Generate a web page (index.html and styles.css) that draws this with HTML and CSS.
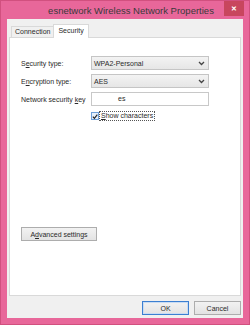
FILE: index.html
```html
<!DOCTYPE html>
<html>
  <head>
    <meta charset="UTF-8">
    <title>esnetwork Wireless Network Properties</title>
    <link rel="stylesheet" href="styles.css">
  </head>
  <body>
    <div class="window">
      <div class="titlebar">
        <span class="title">esnetwork Wireless Network Properties</span>
        <span class="close">&#x2715;</span>
      </div>

      <div class="client">
        <div class="tabs">
          <div class="tab">Connection</div>
          <div class="tab active">Security</div>
        </div>

        <div class="panel">
          <div class="form">
            <div class="row">
              <span class="label">S<u>e</u>curity type:</span>
              <div class="select">
                <span>WPA2-Personal</span>
                <svg class="chevron" width="7" height="5" viewBox="0 0 7 5"><path d="M1 1 L3.5 3.5 L6 1" fill="none" stroke="#444" stroke-width="1.3"/></svg>
              </div>
            </div>
            <div class="row">
              <span class="label">E<u>n</u>cryption type:</span>
              <div class="select">
                <span>AES</span>
                <svg class="chevron" width="7" height="5" viewBox="0 0 7 5"><path d="M1 1 L3.5 3.5 L6 1" fill="none" stroke="#444" stroke-width="1.3"/></svg>
              </div>
            </div>
            <div class="row">
              <span class="label">Network security <u>k</u>ey</span>
              <div class="textbox">es</div>
            </div>
            <div class="row check-row">
              <span class="checkbox">
                <svg width="7" height="7" viewBox="0 0 7 7"><path d="M1 3.6 L2.8 5.6 L6.2 1.2" fill="none" stroke="#222" stroke-width="1.4"/></svg>
              </span>
              <span class="check-label"><u>S</u>how characters</span>
            </div>
          </div>

          <div class="advanced">
            <button class="btn">A<u>d</u>vanced settings</button>
          </div>
        </div>

        <div class="footer">
          <button class="btn dialog-btn default">OK</button>
          <button class="btn dialog-btn">Cancel</button>
        </div>
      </div>
    </div>
  </body>
</html>
```

FILE: styles.css
```css
:root {
  --accent: #e8679a;
  --accent-dark: #d1507f;
  --close: #c8465e;
  --face: #f0f0f0;
  --text: #2a2a2a;
}

html, body {
  margin: 0;
  padding: 0;
}

body {
  width: 250px;
  height: 325px;
  font-family: "Liberation Sans", Arial, sans-serif;
  font-size: 7px;
  color: var(--text);
  overflow: hidden;
}

u {
  text-decoration-thickness: 1px;
  text-underline-offset: 1px;
}

.window {
  box-sizing: border-box;
  width: 250px;
  height: 325px;
  background: var(--accent);
  border: 1px solid var(--accent-dark);
  padding: 0 6px 6px 6px;
  display: flex;
  flex-direction: column;
}

.titlebar {
  height: 18px;
  display: flex;
  align-items: flex-start;
  justify-content: center;
  position: relative;
}

.title {
  font-size: 9.5px;
  color: #3a3a3a;
  line-height: 19px;
  margin-left: 12px;
}

.close {
  position: absolute;
  right: -1px;
  top: 0;
  width: 20px;
  height: 15px;
  background: var(--close);
  color: #fff;
  font-size: 7px;
  font-weight: bold;
  display: flex;
  align-items: center;
  justify-content: center;
}

.client {
  flex: 1;
  background: var(--face);
  display: flex;
  flex-direction: column;
  padding: 5px 2px 3px 2px;
}

.tabs {
  display: flex;
  align-items: flex-end;
  height: 13px;
  padding-left: 2px;
  position: relative;
  z-index: 1;
}

.tab {
  box-sizing: border-box;
  height: 11px;
  padding: 0 3px;
  line-height: 10px;
  border: 1px solid #d9d9d9;
  border-bottom: none;
  background: #f0f0f0;
}

.tab.active {
  height: 14px;
  background: #fff;
  margin-left: -1px;
  margin-bottom: -1px;
  padding: 0 4px;
  line-height: 11px;
}

.panel {
  box-sizing: border-box;
  height: 259px;
  background: #fff;
  border: 1px solid #d9d9d9;
  display: flex;
  flex-direction: column;
  justify-content: space-between;
  padding: 18px 0 54px 11px;
}

.form {
  display: flex;
  flex-direction: column;
  gap: 4px;
}

.row {
  display: flex;
  align-items: center;
  height: 14px;
}

.label {
  width: 70px;
}

.select {
  box-sizing: border-box;
  width: 118px;
  height: 14px;
  border: 1px solid #c5c5c5;
  background: linear-gradient(#f3f3f3, #e6e6e6);
  display: flex;
  align-items: center;
  justify-content: space-between;
  padding: 0 3px 0 2px;
}

.textbox {
  box-sizing: border-box;
  width: 118px;
  height: 14px;
  border: 1px solid #c8c8c8;
  background: #fff;
  line-height: 12px;
  padding-left: 26px;
}

.check-row {
  padding-left: 70px;
  height: 10px;
  margin-top: 1px;
}

.checkbox {
  box-sizing: border-box;
  width: 8px;
  height: 8px;
  border: 1px solid #6f9fd8;
  background: #e8f1fb;
  display: flex;
  align-items: center;
  justify-content: center;
}

.check-label {
  margin-left: 1px;
  padding: 0 1px;
  outline: 1px dotted #555;
  line-height: 8px;
}

.advanced {
  display: flex;
}

.btn {
  box-sizing: border-box;
  height: 14px;
  font-family: "Liberation Sans", Arial, sans-serif;
  font-size: 7px;
  color: var(--text);
  background: linear-gradient(#f2f2f2, #e3e3e3);
  border: 1px solid #adadad;
  padding: 0 8px;
  margin: 0;
}

.advanced .btn {
  width: 76px;
}

.footer {
  display: flex;
  justify-content: flex-end;
  gap: 5px;
  padding-top: 5px;
}

.dialog-btn {
  width: 47px;
}

.dialog-btn.default {
  border-color: #3c7fd1;
  box-shadow: inset 0 0 0 1px #c9dcf3;
}
```
